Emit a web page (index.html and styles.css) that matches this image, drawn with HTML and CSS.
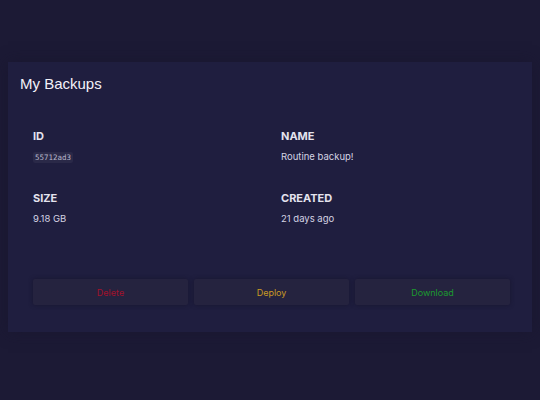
FILE: index.html
```html
<!DOCTYPE html>
<html lang="en">
<head>
    <meta charset="UTF-8">
    <title>My Backups</title>
    <link rel="stylesheet" href="styles.css">
</head>
<body>
    <div class="card">
        <h2 class="card-title">My Backups</h2>
        <div class="backup">
            <div class="details">
                <div class="field">
                    <div class="label">ID</div>
                    <div class="value"><code class="id">55712ad3</code></div>
                </div>
                <div class="field">
                    <div class="label">NAME</div>
                    <div class="value">Routine backup!</div>
                </div>
                <div class="field">
                    <div class="label">SIZE</div>
                    <div class="value">9.18 GB</div>
                </div>
                <div class="field">
                    <div class="label">CREATED</div>
                    <div class="value">21 days ago</div>
                </div>
            </div>
            <div class="actions">
                <button class="btn btn-delete">Delete</button>
                <button class="btn btn-deploy">Deploy</button>
                <button class="btn btn-download">Download</button>
            </div>
        </div>
    </div>
</body>
</html>
```

FILE: styles.css
```css
body {
    margin: 0;
    padding: 62px 8px 0;
    background-color: #1c1a35;
    font-family: Inter, "Liberation Sans", sans-serif;
    color: #e6e4ef;
    height: 400px;
    box-sizing: border-box;
}
.card {
    background-color: #1f1e3f;
    height: 270px;
    box-sizing: border-box;
    padding: 13px 10px 27px 12px;
    box-shadow: 0 0 14px rgba(24, 22, 46, 0.7);
    display: flex;
    flex-direction: column;
}
.card-title {
    margin: 0;
    font-family: "Liberation Sans", Arial, sans-serif;
    font-weight: normal;
    font-size: 15px;
    line-height: 18px;
    color: #f2f1f8;
}
.backup {
    flex: 1;
    display: flex;
    flex-direction: column;
    justify-content: space-between;
    padding: 36px 12px 0 13px;
}
.details {
    display: grid;
    grid-template-columns: 1fr 1fr;
    column-gap: 19px;
    row-gap: 27px;
}
.label {
    font-weight: 700;
    font-size: 11px;
    line-height: 14px;
    color: #e4e3ee;
}
.value {
    margin-top: 7px;
    font-size: 9.5px;
    line-height: 13px;
    color: #d4d3e3;
}
.id {
    font-family: "DejaVu Sans Mono", monospace;
    font-size: 7.5px;
    padding: 1px 2px;
    border-radius: 2px;
    background-color: #2a2948;
    color: #b9b8cc;
}
.actions {
    display: grid;
    grid-template-columns: 1fr 1fr 1fr;
    gap: 6px;
}
.btn {
    height: 26px;
    border: none;
    border-radius: 2px;
    background-color: #25233f;
    box-shadow: 0 0 4px rgba(22, 20, 44, 0.8);
    font-family: Inter, "Liberation Sans", sans-serif;
    font-size: 9px;
    cursor: pointer;
}
.btn-delete {
    color: #a3112b;
}
.btn-deploy {
    color: #c99a24;
}
.btn-download {
    color: #1c9a30;
}
```
